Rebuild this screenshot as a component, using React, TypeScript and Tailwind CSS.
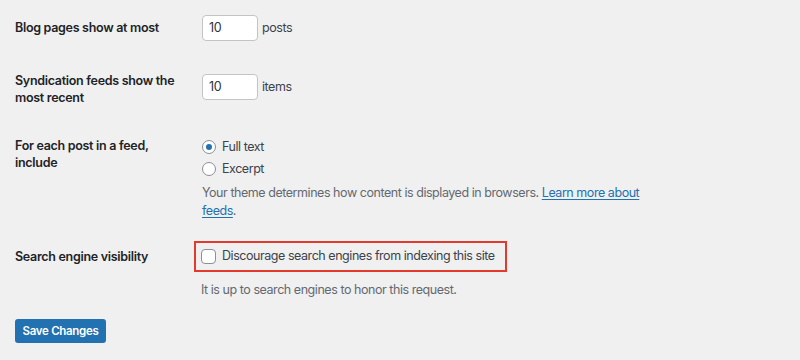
import React from "react";

export default function App() {
  return (
    <div className="w-[800px] h-[360px] bg-[#f0f0f1] text-[12.5px] tracking-[-0.45px] text-[#1d2327] overflow-hidden font-['Inter',sans-serif]">
      <div className="pl-[15px] pt-[15px]">
        {/* Row 1 */}
        <div className="flex items-start">
          <div className="w-[187px] shrink-0 font-semibold tracking-[-0.3px] leading-[26px]">Blog pages show at most</div>
          <div className="flex items-center gap-[4px] text-[#3c434a]">
            <div className="w-[56px] h-[26px] bg-white border border-[#c3c4c7] rounded-[4px] pl-[6px] flex items-center text-[#2c3338]">10</div>
            <span>posts</span>
          </div>
        </div>
        {/* Row 2 */}
        <div className="flex items-start mt-[33px]">
          <div className="w-[187px] shrink-0 font-semibold tracking-[-0.3px] leading-[17px] -mt-[2px]">
            Syndication feeds show the
            <br />
            most recent
          </div>
          <div className="flex items-center gap-[4px] text-[#3c434a]">
            <div className="w-[56px] h-[26px] bg-white border border-[#c3c4c7] rounded-[4px] pl-[6px] flex items-center text-[#2c3338]">10</div>
            <span>items</span>
          </div>
        </div>
        {/* Row 3 */}
        <div className="flex items-start mt-[31px]">
          <div className="w-[187px] shrink-0 font-semibold tracking-[-0.3px] leading-[17px]">
            For each post in a feed,
            <br />
            include
          </div>
          <div className="flex flex-col text-[#3c434a] -mt-[1px]">
            <div className="flex items-center h-[22px]">
              <span className="w-[14px] h-[14px] rounded-full bg-white border border-[#8c8f94] flex items-center justify-center">
                <span className="w-[6px] h-[6px] rounded-full bg-[#2271b1]" />
              </span>
              <span className="ml-[6px]">Full text</span>
            </div>
            <div className="flex items-center h-[22px]">
              <span className="w-[14px] h-[14px] rounded-full bg-white border border-[#8c8f94]" />
              <span className="ml-[6px]">Excerpt</span>
            </div>
            <p className="text-[#646970] leading-[18px] mt-[4px] whitespace-nowrap">
              Your theme determines how content is displayed in browsers.{" "}
              <a className="text-[#2271b1] underline underline-offset-2">Learn more about</a>
              <br />
              <a className="text-[#2271b1] underline underline-offset-2">feeds</a>.
            </p>
          </div>
        </div>
        {/* Row 4 */}
        <div className="flex items-start mt-[21px]">
          <div className="w-[179px] shrink-0 font-semibold tracking-[-0.3px] leading-[17px] mt-[7px]">Search engine visibility</div>
          <div className="flex flex-col">
            <div className="w-[313px] h-[31px] border-2 border-[#e23a2c] flex items-center pl-[5px] text-[#3c434a]">
              <span className="w-[15px] h-[15px] shrink-0 bg-white border border-[#8c8f94] rounded-[4px]" />
              <span className="ml-[6px] whitespace-nowrap">Discourage search engines from indexing this site</span>
            </div>
            <div className="pl-[7px] mt-[9px] leading-[18px] text-[#646970]">It is up to search engines to honor this request.</div>
          </div>
        </div>
        {/* Button */}
        <div className="mt-[20px]">
          <button className="w-[91px] h-[24px] bg-[#2271b1] text-white font-semibold tracking-[-0.3px] rounded-[3px] text-[11.5px] leading-[24px]">Save Changes</button>
        </div>
      </div>
    </div>
  );
}
